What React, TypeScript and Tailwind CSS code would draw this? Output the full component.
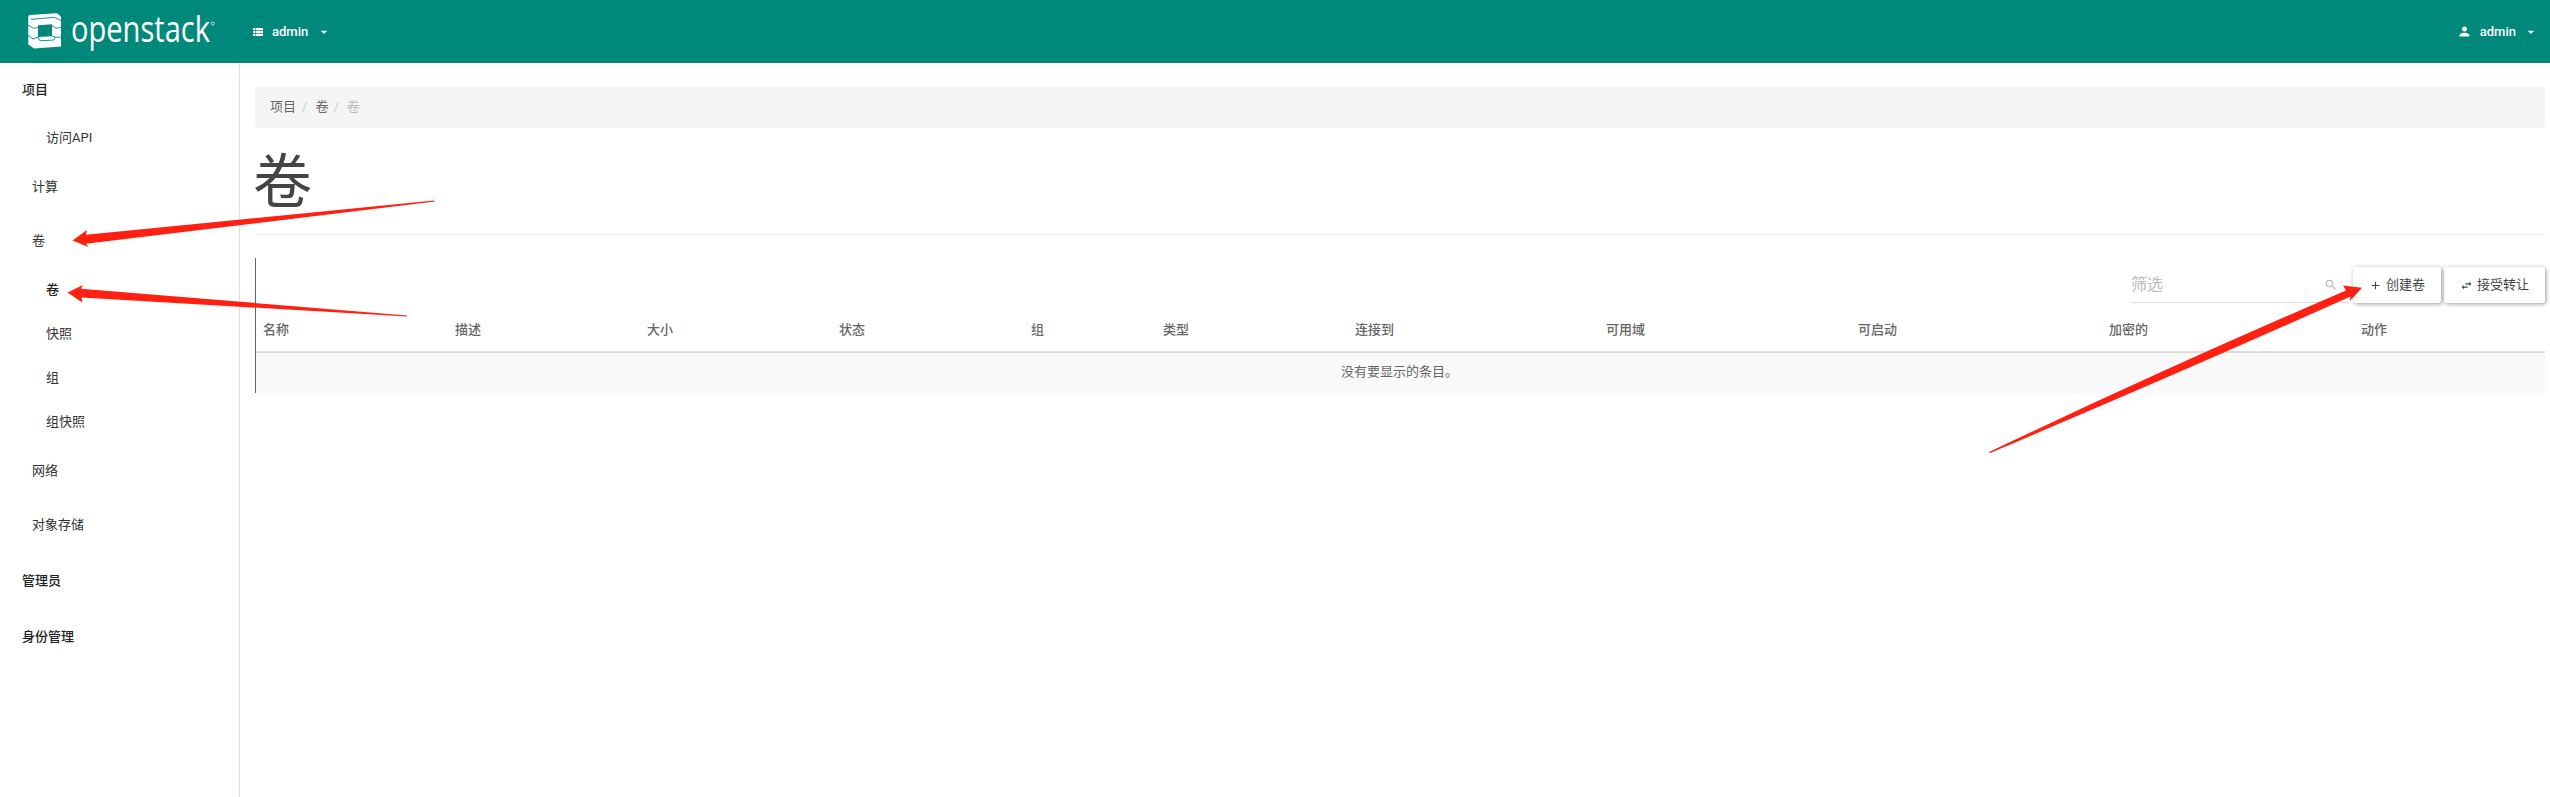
import React from "react";
import { MdAdd, MdArrowDropDown, MdPerson, MdSearch, MdSwapHoriz } from "react-icons/md";

const columns: { label: string; width: string }[] = [
  { label: "名称", width: "w-[192px]" },
  { label: "描述", width: "w-[192px]" },
  { label: "大小", width: "w-[192px]" },
  { label: "状态", width: "w-[192px]" },
  { label: "组", width: "w-[132px]" },
  { label: "类型", width: "w-[192px]" },
  { label: "连接到", width: "w-[251px]" },
  { label: "可用域", width: "w-[252px]" },
  { label: "可启动", width: "w-[251px]" },
  { label: "加密的", width: "w-[252px]" },
  { label: "动作", width: "flex-1" },
];

const nav: { label: string; style: string }[] = [
  { label: "项目", style: "pl-[22px] h-[53px] font-medium text-[#212121]" },
  { label: "访问API", style: "pl-[46px] h-11" },
  { label: "计算", style: "pl-8 h-[54px]" },
  { label: "卷", style: "pl-8 h-[54px]" },
  { label: "卷", style: "pl-[46px] h-11 font-medium text-[#212121]" },
  { label: "快照", style: "pl-[46px] h-11" },
  { label: "组", style: "pl-[46px] h-11" },
  { label: "组快照", style: "pl-[46px] h-11" },
  { label: "网络", style: "pl-8 h-[54px]" },
  { label: "对象存储", style: "pl-8 h-[54px]" },
  { label: "管理员", style: "pl-[22px] h-[57px] font-medium text-[#212121]" },
  { label: "身份管理", style: "pl-[22px] h-14 font-medium text-[#212121]" },
];

function Logo() {
  return (
    <svg className="block overflow-visible" width="192" height="63" viewBox="0 0 192 63">
      <path
        fill="#fff"
        fillRule="evenodd"
        d="M3 15 L29 13.300 Q31 13.300 34 17 V46.500 L7 48.500 L1.300 44.500 V16.500 Q1.300 15.200 3 15 Z M11 25.200 L25 24.300 V36.300 L11 37 Z"
      />
      <path
        d="M4 19.300 L27.500 17.400 L34 20.500 M1 25 L6.500 28.300 L11 27.500 M25 25.500 L29 28.300 L34 27.500 M1 35.300 L6 39 L11 37 L13 40.800 L27 40 L28.300 37 L25 36.300 M28.300 37.500 L34 37"
        stroke="#00897b"
        strokeWidth="0.900"
        fill="none"
      />
      <text x="44" y="41.500" fill="#fff" fontFamily="Open Sans, Noto Sans, sans-serif" fontSize="37" textLength="139" lengthAdjust="spacingAndGlyphs">openstack</text>
      <circle cx="185.800" cy="23.500" r="1.500" fill="none" stroke="#fff" strokeWidth="0.700" />
    </svg>
  );
}

function ListIcon() {
  return (
    <svg width="10" height="8" viewBox="0 0 10 8" fill="#fff">
      <path d="M0 0h2.500v2.200H0z M3 0h7v2.200H3z M0 2.900h2.500v2.200H0z M3 2.900h7v2.200H3z M0 5.800h2.500V8H0z M3 5.800h7V8H3z" />
    </svg>
  );
}

export default function App() {
  return (
    <div className="relative flex h-[797px] w-[2550px] flex-col overflow-hidden bg-white font-[Roboto,'Noto_Sans_CJK_SC',sans-serif] text-[13px] leading-[22px] text-[#666]">
      <header className="flex h-[63px] shrink-0 items-center bg-[#00897b] text-white">
        <div className="ml-[27px] w-[226px]"><Logo /></div>
        <ListIcon />
        <span className="ml-[9px] font-medium">admin</span>
        <MdArrowDropDown size={16} className="ml-2" />
        <div className="ml-auto flex items-center pr-[11px]">
          <MdPerson size={15} />
          <span className="ml-[8px] font-medium">admin</span>
          <MdArrowDropDown size={16} className="ml-[7px]" />
        </div>
      </header>
      <div className="flex flex-1">
        <nav className="flex w-60 flex-col border-r border-[#ddd] text-[#333]">
          {nav.map((item, i) => (
            <div key={i} className={"flex shrink-0 items-center " + item.style}>{item.label}</div>
          ))}
        </nav>
        <main className="flex flex-1 flex-col pl-[15px] pr-[5px] pt-6">
          <div className="flex h-[41px] items-center rounded-[3px] bg-[#f5f5f5] pb-[2px] pl-[15px]">
            <span>项目</span>
            <span className="pl-[6px] text-[#ccc]">/</span>
            <span className="pl-[8px]">卷</span>
            <span className="pl-[5px] text-[#ccc]">/</span>
            <span className="pl-[8px] text-[#bbb]">卷</span>
          </div>
          <div className="h-[107px] border-b border-[#eee] pt-6">
            <h1 className="-ml-[2px] text-[59px] leading-[62px] text-[#444]">卷</h1>
          </div>
          <section className="mt-[23px] flex h-[135px] flex-col border-l border-[#666]">
            <div className="flex h-[53px] items-start justify-end pt-[9px]">
              <div className="mr-[3px] flex h-[36px] w-[219px] items-center justify-between border-b border-[#ddd] pr-3 text-base text-[#bbb]">
                <span>筛选</span>
                <MdSearch size={14} />
              </div>
              <button className="mr-[3px] flex h-9 w-[88px] items-center justify-center rounded-[3px] text-[#444] shadow-[1px_1px_4px_rgba(0,0,0,0.4)]">
                <MdAdd size={13} className="mr-1" />创建卷
              </button>
              <button className="flex h-9 w-[101px] items-center justify-center rounded-[3px] text-[#444] shadow-[1px_1px_4px_rgba(0,0,0,0.4)]">
                <MdSwapHoriz size={13} className="mr-1" />接受转让
              </button>
            </div>
            <div className="flex h-[42px] border-b-2 border-[#ddd] pl-[7px] pt-[8px] font-medium">
              {columns.map((c) => (
                <div key={c.label} className={"shrink-0 " + c.width}>{c.label}</div>
              ))}
            </div>
            <div className="flex h-10 items-center justify-center bg-[#f9f9f9] pb-[2px] pr-[2px]">没有要显示的条目。</div>
          </section>
        </main>
      </div>
      <svg className="pointer-events-none absolute inset-0" width="2550" height="797" viewBox="0 0 2550 797" fill="#ff2012">
        <path d="M72.500 240.500 L87 230 L86 234.800 L434 200.500 L435 201.500 L86 243.800 L88.500 247 Z" />
        <path d="M67.500 292.500 L83 285 L81 288.700 L407 315.500 V316.500 L81.500 297.600 L82.300 302.500 Z" />
        <path d="M1989 452 Q2170 366 2346 290.500 L2343 285.500 L2362 287.800 L2350 301 L2350.500 296.500 Q2180 373 1990 453 Z" />
      </svg>
    </div>
  );
}
